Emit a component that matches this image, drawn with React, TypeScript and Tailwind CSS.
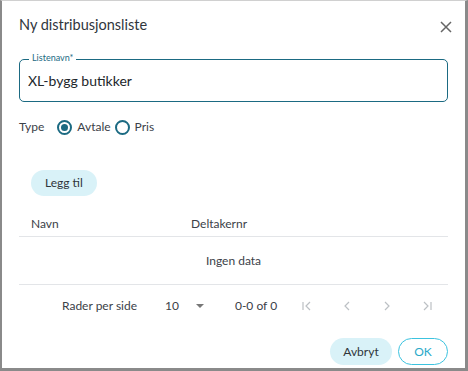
import React, { useState } from "react";

const font = { fontFamily: 'Lato, "Noto Sans", sans-serif' };

const Radio = ({ checked }: { checked: boolean }) => (
  <span className="flex h-[15px] w-[15px] items-center justify-center rounded-full border-2 border-[#1b6a82]">
    {checked && <span className="h-[7px] w-[7px] rounded-full bg-[#1b6a82]" />}
  </span>
);

const PageIcon = ({ d }: { d: string }) => (
  <svg width="12" height="12" viewBox="0 0 12 12" fill="none" stroke="#bcc0c4" strokeWidth="1.2">
    <path d={d} />
  </svg>
);

const App = () => {
  const [name, setName] = useState<string>("XL-bygg butikker");
  const [type, setType] = useState<string>("Avtale");

  return (
    <div
      className="h-[371px] w-[468px] border-t border-l-2 border-r-[3px] border-b-[3px] border-t-[#d0d0d0] border-l-[#8a8a8a] border-r-[#8a8a8a] border-b-[#8a8a8a] bg-white text-[#3b4148]"
      style={font}
    >
      <div className="flex items-center justify-between pl-[17px] pr-[13px] pt-[11px]">
        <h1 className="text-[14.5px] leading-[26px] text-[#30363c]">Ny distribusjonsliste</h1>
        <svg width="12" height="12" viewBox="0 0 12 12" stroke="#666" strokeWidth="1.5" className="mt-[4px]">
          <path d="M1 1L11 11M11 1L1 11" />
        </svg>
      </div>

      <div className="px-[17px]">
        <div className="relative mt-[21px] h-[43px] rounded-[5px] border-[1.5px] border-[#1b6a82]">
          <span className="absolute -top-[8px] left-[9px] bg-white px-[3px] text-[9px] leading-[12px] text-[#1b6a82]">
            Listenavn*
          </span>
          <input
            className="h-full w-full bg-transparent px-[8px] text-[14px] text-[#22272c] outline-none caret-[#222]"
            value={name}
            onChange={(e) => setName(e.target.value)}
            autoFocus
          />
        </div>

        <div className="mt-[16px] flex items-center text-[12px] leading-[18px]">
          <span className="mr-[13px]">Type</span>
          {["Avtale", "Pris"].map((t) => (
            <label key={t} className="mr-[4px] flex cursor-pointer items-center gap-[5px]" onClick={() => setType(t)}>
              <Radio checked={type === t} />
              <span>{t}</span>
            </label>
          ))}
        </div>

        <button className="ml-[12px] mt-[34px] h-[26px] rounded-full bg-[#d9f2f8] px-[14px] text-[12px] text-[#2f353b]">
          Legg til
        </button>

        <div className="mt-[15px] flex h-[26px] items-center border-b border-[#e3e5e8] text-[12px]">
          <span className="w-[172px] pl-[12px]">Navn</span>
          <span>Deltakernr</span>
        </div>
        <div className="flex h-[48px] items-center justify-center border-b border-[#e3e5e8] text-[12px]">
          Ingen data
        </div>

        <div className="flex h-[42px] items-center text-[12px]">
          <span className="ml-[43px]">Rader per side</span>
          <span className="ml-[28px]">10</span>
          <svg width="8" height="5" viewBox="0 0 8 5" className="ml-[17px]" fill="#777">
            <path d="M0 0H8L4 4Z" />
          </svg>
          <span className="ml-[31px]">0-0 of 0</span>
          <div className="ml-[24px] flex items-center gap-[28px]">
            <PageIcon d="M2 2V10M9 2L5 6L9 10" />
            <PageIcon d="M8 2L4 6L8 10" />
            <PageIcon d="M4 2L8 6L4 10" />
            <PageIcon d="M3 2L7 6L3 10M10 2V10" />
          </div>
        </div>

        <div className="mt-[11px] flex justify-end gap-[6px]">
          <button className="h-[27px] w-[62px] rounded-full bg-[#d9f2f8] text-[12px] text-[#2f353b]">Avbryt</button>
          <button className="h-[27px] w-[50px] rounded-full border-[1.5px] border-[#3cc3df] text-[12px] text-[#2aa9c9]">
            OK
          </button>
        </div>
      </div>
    </div>
  );
};

export default App;
